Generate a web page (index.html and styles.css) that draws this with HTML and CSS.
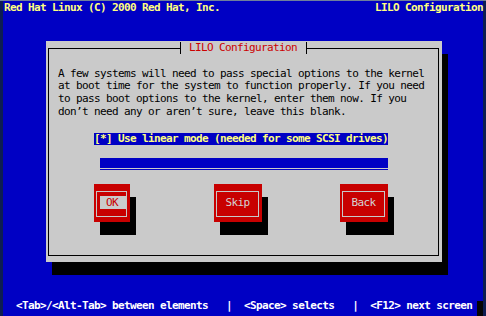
FILE: index.html
```html
<!DOCTYPE html>
<html lang="en">
<head>
    <meta charset="UTF-8">
    <title>LILO Configuration</title>
    <link rel="stylesheet" href="styles.css">
</head>
<body>
    <div class="screen">
        <!-- root line -->
        <div class="topbar">
            <span>Red Hat Linux (C) 2000 Red Hat, Inc.</span>
            <span>LILO Configuration</span>
        </div>

        <div class="dialog">
            <fieldset class="frame">
                <legend class="frame-title">LILO Configuration</legend>
                <p class="message">A few systems will need to pass special options to the kernel<br>at boot time for the system to function properly. If you need<br>to pass boot options to the kernel, enter them now. If you<br>don&#8217;t need any or aren&#8217;t sure, leave this blank.</p>
                <div class="checkbox">[*] Use linear mode (needed for some SCSI drives)</div>
                <div class="entry"></div>
                <div class="buttons">
                    <div class="btn btn-ok btn-focus"><div class="btn-frame"><span class="btn-label">OK</span></div></div>
                    <div class="btn btn-skip"><div class="btn-frame"><span class="btn-label">Skip</span></div></div>
                    <div class="btn btn-back"><div class="btn-frame"><span class="btn-label">Back</span></div></div>
                </div>
            </fieldset>
        </div>

        <!-- help line -->
        <div class="helpline">
            <span class="help-text">  &lt;Tab&gt;/&lt;Alt-Tab&gt; between elements   |  &lt;Space&gt; selects   |  &lt;F12&gt; next screen</span>
            <span class="cursor"></span>
        </div>
    </div>
</body>
</html>
```

FILE: styles.css
```css
html,
body {
    margin: 0;
    width: 486px;
    height: 316px;
    overflow: hidden;
    background: #0d1d52;
}

body {
    box-sizing: border-box;
    border-top: 1px solid #6f7f9c;
}

.screen {
    margin: 0 3px;
    height: 315px;
    background: #0000c4;
    display: flex;
    flex-direction: column;
    font-family: "DejaVu Sans Mono", monospace;
    font-size: 11px;
    letter-spacing: -0.62px;
}

.topbar {
    display: flex;
    justify-content: space-between;
    padding-top: 1px;
    padding-left: 1px;
    line-height: 12px;
    color: #ffff80;
    font-weight: bold;
    white-space: pre;
}

.dialog {
    margin-top: 27px;
    margin-left: 43px;
    width: 396px;
    box-sizing: border-box;
    padding: 1px 3px 6px 2px;
    background: #cacaca;
    box-shadow: 6px 13px 0 #000;
}

.frame {
    margin: 0;
    padding: 0;
    min-width: 0;
    border: 1px solid #000;
}

.frame-title {
    margin: 0 auto;
    padding: 0 9px 0 8px;
    border-left: 1px solid #000;
    border-right: 1px solid #000;
    line-height: 12px;
    color: #cc0000;
}

.message {
    margin: 13.7px 0 0 9px;
    line-height: 12.67px;
    color: #000;
    white-space: nowrap;
}

.checkbox {
    margin: 14.3px 0 0 45px;
    width: fit-content;
    height: 12px;
    line-height: 12px;
    background: #0000c4;
    color: #ffff80;
    font-weight: bold;
    white-space: pre;
}

.entry {
    margin: 13.3px 0 0 51px;
    width: 288px;
    height: 10px;
    padding-bottom: 1px;
    border-bottom: 1px solid #0000c4;
    background: #0000c4;
    background-clip: content-box;
}

.buttons {
    display: flex;
    margin: 14px 0 33px 45px;
}

.btn {
    box-sizing: border-box;
    padding: 7px 3px 5px 2px;
    background: #c80000;
    box-shadow: 6px 13px 0 #000;
}

.btn-ok {
    width: 36px;
}

.btn-skip {
    width: 48px;
    margin-left: 84px;
}

.btn-back {
    width: 48px;
    margin-left: 78px;
}

.btn-frame {
    display: flex;
    justify-content: center;
    padding: 4px 0 7px;
    border: 1px solid #c8c8c8;
}

.btn-label {
    line-height: 13px;
    color: #d4d4d4;
}

.btn-focus .btn-frame {
    justify-content: flex-end;
}

.btn-focus .btn-label {
    padding: 0 8px 0 6px;
    background: #cacaca;
    color: #c80000;
}

.helpline {
    display: flex;
    justify-content: space-between;
    margin-top: auto;
    padding-left: 1px;
}

.help-text {
    padding-bottom: 4px;
    line-height: 13px;
    color: #fff;
    font-weight: bold;
    white-space: pre;
}

.cursor {
    width: 6px;
    margin-top: 1.5px;
    background: #050505;
}
```
